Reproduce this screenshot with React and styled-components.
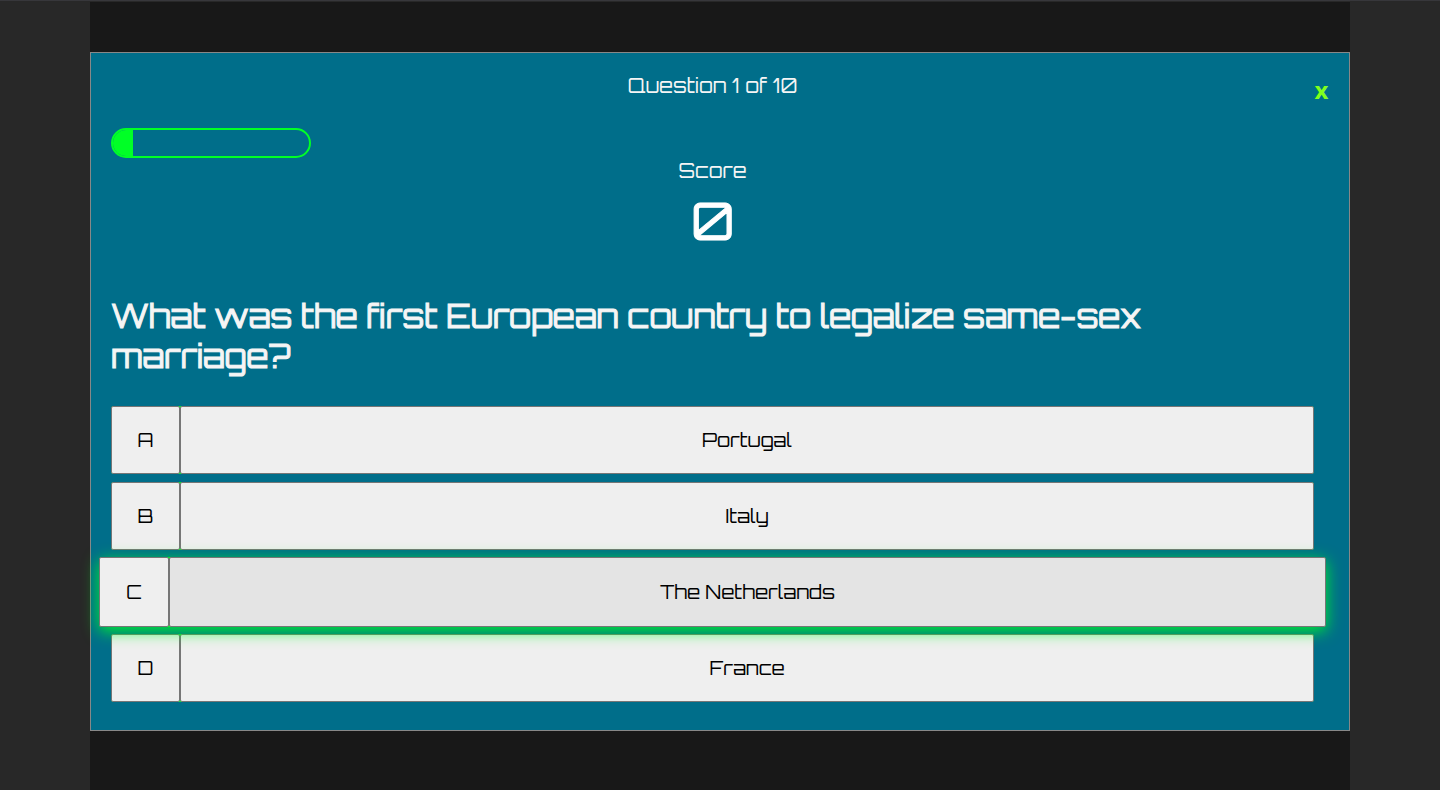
import React, { useState } from "react";
import styled, { createGlobalStyle } from "styled-components";

const GlobalStyle = createGlobalStyle`
  * { box-sizing: border-box; }
  body {
    margin: 0;
    background: #282828;
    font-family: "Orbitron", "DejaVu Sans", sans-serif;
    color: #f5f5f5;
  }
  button { font: inherit; }
`;

const Page = styled.div`
  min-height: 100vh;
  display: flex;
  flex-direction: column;
  border-top: 1px solid #37373b;
`;

const Column = styled.main`
  flex: 1;
  width: 100%;
  max-width: 1260px;
  margin: 0 auto;
  padding: 50px 0;
  border-top: 1px solid #282828;
  background: #181818;
`;

const Panel = styled.section`
  display: flex;
  align-items: flex-start;
  padding: 20px 20px 28px;
  border: 1px solid #888;
  background: #006e8a;
`;

const Quiz = styled.div`
  flex: 1;
  min-width: 0;
`;

const CloseButton = styled.button`
  flex: none;
  width: 15px;
  margin-top: 3px;
  padding: 0;
  border: 0;
  background: none;
  color: #7fff1e;
  font-family: "Open Sans", sans-serif;
  font-size: 24px;
  font-weight: 700;
  line-height: 28px;
  cursor: pointer;
`;

const Label = styled.p`
  margin: 0;
  font-size: 20px;
  font-weight: 400;
  line-height: 26px;
  text-align: center;
`;

const Progress = styled.div`
  width: 200px;
  height: 30px;
  margin-top: 29px;
  border: 2px solid #00ff26;
  border-radius: 15px;
  overflow: hidden;
`;

const ProgressFill = styled.div`
  height: 100%;
  background: #00ff26;
`;

const Score = styled.p`
  margin: 0;
  color: #fff;
  font-size: 51px;
  font-weight: 400;
  line-height: 72px;
  text-align: center;
  -webkit-text-stroke: 1px currentColor;
`;

const Question = styled.h1`
  margin: 40px 0 30px;
  font-size: 32px;
  font-weight: 400;
  line-height: 40px;
  -webkit-text-stroke: 1px currentColor;
`;

const Answers = styled.div`
  display: grid;
  gap: 8px;
`;

const Answer = styled.div`
  display: flex;
  height: 68px;
  border-radius: 3px;
  background: #00ff26;

  ${({ $active }) => $active && `
    position: relative;
    z-index: 1;
    height: 70px;
    margin: -1px -12px;
    box-shadow: 0 4px 16px 0 rgba(0, 255, 38, 0.9);
  `}
`;

const AnswerButton = styled.button`
  padding: 0;
  border: 1px solid #767676;
  border-radius: 2px;
  background: ${({ $active }) => ($active ? "#e4e4e4" : "#efefef")};
  color: #000;
  font-size: 19px;
  line-height: 26px;
  cursor: pointer;
`;

const LetterButton = styled(AnswerButton)`
  flex: 0 0 ${({ $wide }) => ($wide ? "70px" : "69px")};
`;

const TextButton = styled(AnswerButton)`
  flex: 1;
`;

const answers = ["Portugal", "Italy", "The Netherlands", "France"];

export default function App() {
  const [active, setActive] = useState(2);
  return (
    <>
      <GlobalStyle />
      <Page>
        <Column>
          <Panel>
            <Quiz>
              <Label>Question 1 of 10</Label>
              <Progress role="progressbar" aria-label="Progress" aria-valuemin={0} aria-valuemax={10} aria-valuenow={1}>
                <ProgressFill style={{ width: "10%" }} />
              </Progress>
              <Label>Score</Label>
              <Score>0</Score>
              <Question>
                What was the first European country to legalize same-sex marriage?
              </Question>
              <Answers>
                {answers.map((text, i) => (
                  <Answer key={text} $active={i === active} onMouseEnter={() => setActive(i)}>
                    <LetterButton $wide={i === active}>{"ABCD"[i]}</LetterButton>
                    <TextButton $active={i === active}>{text}</TextButton>
                  </Answer>
                ))}
              </Answers>
            </Quiz>
            <CloseButton>x</CloseButton>
          </Panel>
        </Column>
      </Page>
    </>
  );
}
